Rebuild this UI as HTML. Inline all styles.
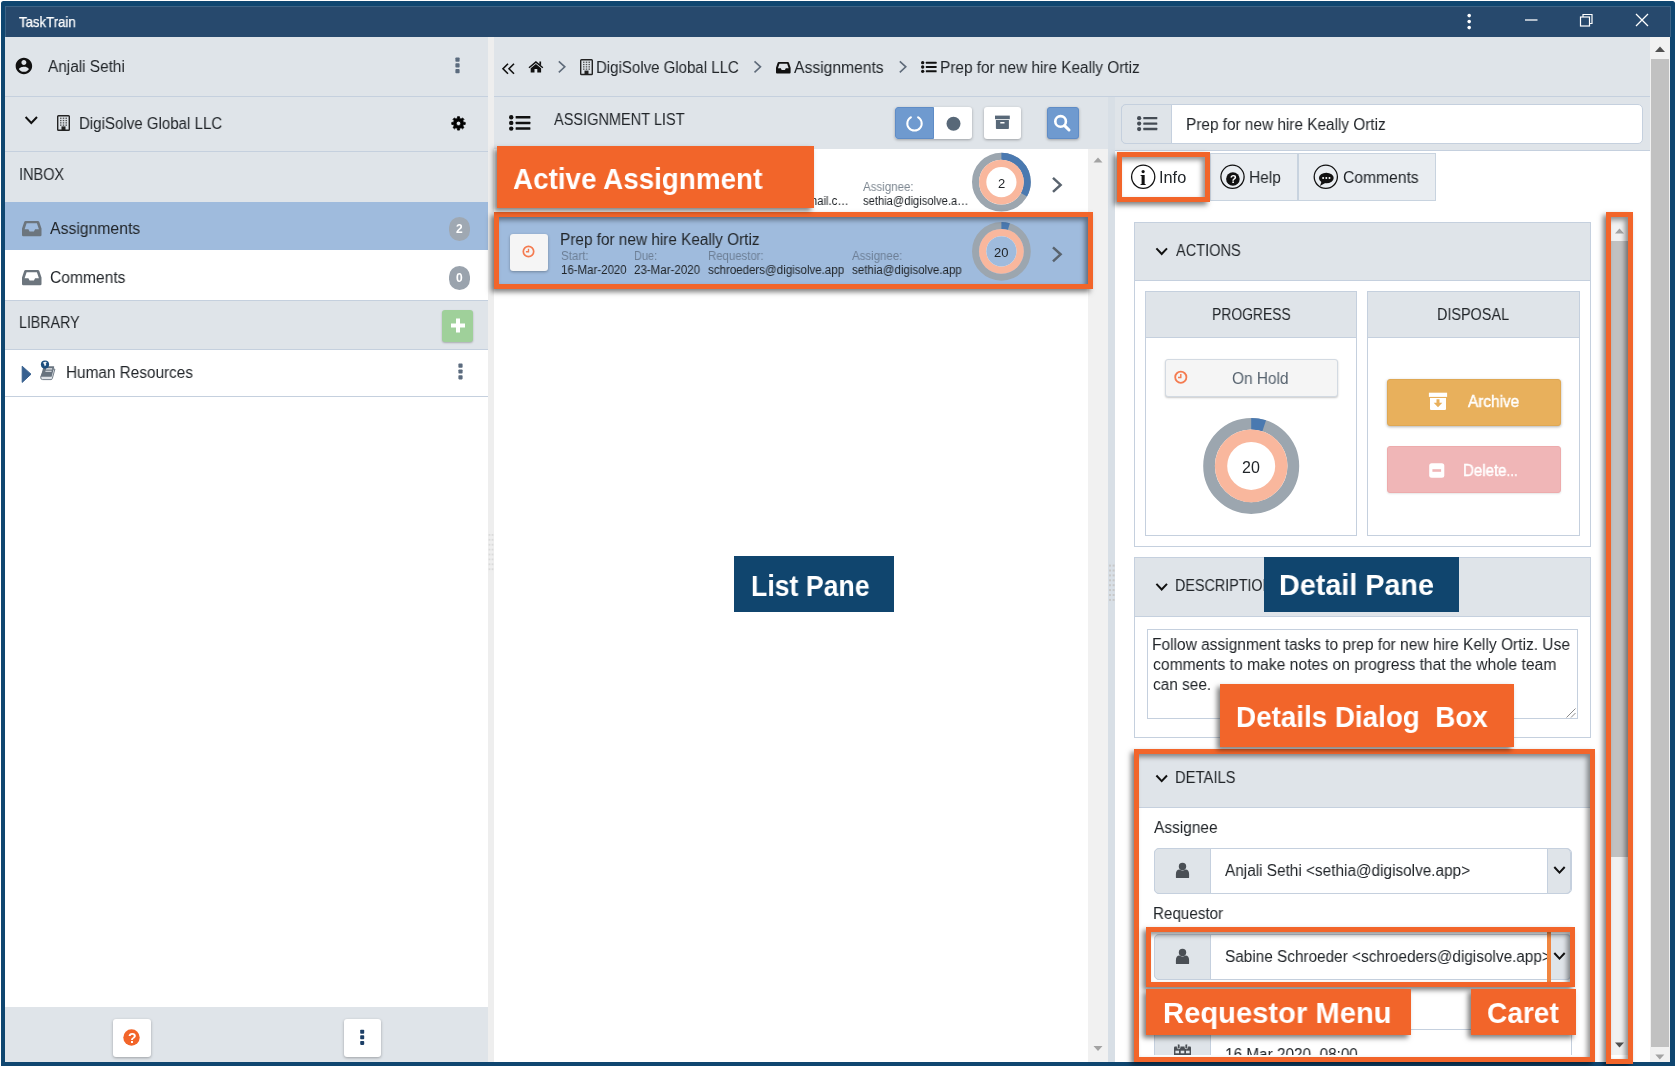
<!DOCTYPE html>
<html lang="en">
<head>
<meta charset="utf-8">
<title>TaskTrain</title>
<style>
*{box-sizing:border-box;margin:0;padding:0}
html,body{width:1676px;height:1066px;overflow:hidden}
body{background:#fff;font-family:"Liberation Sans",Arial,sans-serif;font-size:15px;color:#212529;position:relative}
.abs{position:absolute}
.t{position:absolute;white-space:nowrap;line-height:1;will-change:transform}
svg{position:absolute;overflow:visible}
.gray{background:#dfe4e9}
.bb{border-bottom:1px solid #c5d0de}
.white{background:#fff}
.btn{position:absolute;border-radius:3px;box-shadow:0 1px 3px rgba(0,0,0,.3)}
.call{position:absolute;background:#f2652a;box-shadow:-3px 3px 5px rgba(0,0,0,.5)}
.hl{position:absolute;border:5px solid #f2652a;box-shadow:-3px 3px 5px rgba(0,0,0,.5), inset -3px 3px 5px rgba(0,0,0,.45)}
.panel{position:absolute;border:1px solid #c5d0de;background:#fff}
.phead{position:absolute;left:0;top:0;right:0;background:#dfe4e9;border-bottom:1px solid #c5d0de}
</style>
</head>
<body>
<div class="abs" style="left:0.5px;top:1.4px;width:1674.6px;height:1064.6px;background:#0f4670;border-radius:2.5px 2.5px 0 0"></div>
<div class="abs" style="left:5px;top:6px;width:1665.6px;height:31px;background:#27496d;border:1px solid #3d6385;border-bottom:none"></div>
<div class="t" style="left:19.00px;top:15px;font-size:14.5px;transform:scaleX(0.9093);transform-origin:0 0;color:#fff;-webkit-text-stroke:0.25px #fff;">TaskTrain</div>
<svg style="left:0;top:0" width="1" height="1"><circle cx="1469.2" cy="15.6" r="1.8" fill="#fff"/><circle cx="1469.2" cy="21.6" r="1.8" fill="#fff"/><circle cx="1469.2" cy="27.6" r="1.8" fill="#fff"/><line x1="1525" y1="20" x2="1537.5" y2="20" stroke="#fff" stroke-width="1.3"/><rect x="1580.5" y="17" width="9" height="9" fill="none" stroke="#fff" stroke-width="1.2"/><polyline points="1583,17 1583,14.5 1592,14.5 1592,23.5 1589.5,23.5" fill="none" stroke="#fff" stroke-width="1.2"/><path d="M1636,14 L1648,26 M1648,14 L1636,26" stroke="#fff" stroke-width="1.3" fill="none"/></svg>
<div class="abs" style="left:5px;top:37px;width:1665px;height:1025px;background:#fff"></div>
<div class="abs" style="left:5px;top:37px;width:483px;height:1025px;background:#fff"></div>
<div class="abs" style="left:488px;top:37px;width:6px;height:1025px;background:#eeeeee"></div>
<div class="abs" style="left:1649.3px;top:37px;width:20.9px;height:1025px;background:#f1f1f1"></div>
<div class="abs" style="left:1651px;top:58.5px;width:18.2px;height:988.5px;background:#c1c1c1"></div>
<svg style="left:0;top:0" width="1" height="1"><path d="M1655,52 L1660,46.5 L1665,52Z" fill="#505050"/><path d="M1655.3,1054.6 L1659.8,1059.5 L1664.3,1054.6Z" fill="#a3a3a3"/></svg>
<div class="abs gray bb" style="left:5px;top:37px;width:483px;height:60px;"></div>
<div class="abs gray bb" style="left:5px;top:97px;width:483px;height:55px;"></div>
<div class="abs gray" style="left:5px;top:152px;width:483px;height:50px;"></div>
<div class="abs" style="left:5px;top:202px;width:483px;height:48px;background:#9fbbdd"></div>
<div class="abs white bb" style="left:5px;top:250px;width:483px;height:51px;"></div>
<div class="abs gray bb" style="left:5px;top:301px;width:483px;height:49px;"></div>
<div class="abs white bb" style="left:5px;top:350px;width:483px;height:47px;"></div>
<div class="abs gray" style="left:5px;top:1007px;width:483px;height:55px;"></div>
<svg style="left:14.15px;top:56.3px" width="19.8" height="19.8" viewBox="0 0 24 24" ><path d="M12 2C6.48 2 2 6.48 2 12s4.48 10 10 10 10-4.48 10-10S17.52 2 12 2zm0 3c1.66 0 3 1.34 3 3s-1.34 3-3 3-3-1.34-3-3 1.34-3 3-3zm0 14.2c-2.5 0-4.71-1.28-6-3.22.03-1.99 4-3.08 6-3.08 1.99 0 5.97 1.09 6 3.08-1.29 1.94-3.5 3.22-6 3.22z" fill="#111"/></svg>
<div class="t" style="left:48.30px;top:59px;font-size:16px;transform:scaleX(0.9598);transform-origin:0 0;">Anjali Sethi</div>
<svg style="left:0;top:0" width="1" height="1"><rect x="455.4" y="57.5" width="4.2" height="4.2" rx="0.8" fill="#5b6b7e"/><rect x="455.4" y="63.3" width="4.2" height="4.2" rx="0.8" fill="#5b6b7e"/><rect x="455.4" y="69.1" width="4.2" height="4.2" rx="0.8" fill="#5b6b7e"/></svg>
<svg style="left:0;top:0" width="1" height="1"><polyline points="25.6,117.0 31.3,123.0 37.0,117.0" fill="none" stroke="#111" stroke-width="2"/></svg>
<svg style="left:57px;top:115.3px" width="13" height="16"><rect x="0.7" y="0.7" width="11.6" height="14.6" fill="none" stroke="#222" stroke-width="1.4" rx="0.8"/><rect x="3.02" y="2.60" width="1.5" height="1.3" fill="#222" opacity="0.75"/><rect x="3.02" y="4.90" width="1.5" height="1.3" fill="#222" opacity="0.75"/><rect x="3.02" y="7.20" width="1.5" height="1.3" fill="#222" opacity="0.75"/><rect x="3.02" y="9.50" width="1.5" height="1.3" fill="#222" opacity="0.75"/><rect x="5.75" y="2.60" width="1.5" height="1.3" fill="#222" opacity="0.75"/><rect x="5.75" y="4.90" width="1.5" height="1.3" fill="#222" opacity="0.75"/><rect x="5.75" y="7.20" width="1.5" height="1.3" fill="#222" opacity="0.75"/><rect x="5.75" y="9.50" width="1.5" height="1.3" fill="#222" opacity="0.75"/><rect x="8.48" y="2.60" width="1.5" height="1.3" fill="#222" opacity="0.75"/><rect x="8.48" y="4.90" width="1.5" height="1.3" fill="#222" opacity="0.75"/><rect x="8.48" y="7.20" width="1.5" height="1.3" fill="#222" opacity="0.75"/><rect x="8.48" y="9.50" width="1.5" height="1.3" fill="#222" opacity="0.75"/><rect x="4.50" y="11.40" width="4" height="4" fill="#222"/></svg>
<div class="t" style="left:79.26px;top:116px;font-size:16px;transform:scaleX(0.9414);transform-origin:0 0;">DigiSolve Global LLC</div>
<svg style="left:0;top:0" width="1" height="1"><path d="M465.22,122.39 L465.22,124.41 L463.38,124.61 L462.81,126.00 L463.97,127.44 L462.54,128.87 L461.10,127.71 L459.71,128.28 L459.51,130.12 L457.49,130.12 L457.29,128.28 L455.90,127.71 L454.46,128.87 L453.03,127.44 L454.19,126.00 L453.62,124.61 L451.78,124.41 L451.78,122.39 L453.62,122.19 L454.19,120.80 L453.03,119.36 L454.46,117.93 L455.90,119.09 L457.29,118.52 L457.49,116.68 L459.51,116.68 L459.71,118.52 L461.10,119.09 L462.54,117.93 L463.97,119.36 L462.81,120.80 L463.38,122.19Z M456.26,123.4 a2.24,2.24 0 1,0 4.49,0 a2.24,2.24 0 1,0 -4.49,0Z" fill="#000" fill-rule="evenodd" stroke="#000" stroke-width="0.8" stroke-linejoin="round"/></svg>
<div class="t" style="left:19.09px;top:167px;font-size:16px;transform:scaleX(0.9060);transform-origin:0 0;">INBOX</div>
<svg style="left:21.7px;top:221.4px" width="19.5" height="15.2" viewBox="0 0 19.5 15.2" preserveAspectRatio="none"><path d="M3.6 0 H15.9 Q16.9 0 17.3 0.9 L19.5 7.6 V13.9 Q19.5 15.2 18.2 15.2 H1.3 Q0 15.2 0 13.9 V7.6 L2.2 0.9 Q2.6 0 3.6 0 Z M4.6 2.2 L2.6 8.2 H6.4 L7.6 10.6 H11.9 L13.1 8.2 H16.9 L14.9 2.2 Z" fill="#6c757d" fill-rule="evenodd"/></svg>
<div class="t" style="left:49.80px;top:221px;font-size:16px;transform:scaleX(0.9848);transform-origin:0 0;">Assignments</div>
<div class="abs" style="left:448.9px;top:217px;width:21px;height:24px;border-radius:10.5px;background:#9fa8b2"></div>
<div class="t" style="left:455.90px;top:223px;font-size:12px;color:#fff;font-weight:bold;">2</div>
<svg style="left:21.7px;top:270px" width="19.5" height="15.2" viewBox="0 0 19.5 15.2" preserveAspectRatio="none"><path d="M3.6 0 H15.9 Q16.9 0 17.3 0.9 L19.5 7.6 V13.9 Q19.5 15.2 18.2 15.2 H1.3 Q0 15.2 0 13.9 V7.6 L2.2 0.9 Q2.6 0 3.6 0 Z M4.6 2.2 L2.6 8.2 H6.4 L7.6 10.6 H11.9 L13.1 8.2 H16.9 L14.9 2.2 Z" fill="#6c757d" fill-rule="evenodd"/></svg>
<div class="t" style="left:49.80px;top:270px;font-size:16px;transform:scaleX(0.9761);transform-origin:0 0;">Comments</div>
<div class="abs" style="left:448.9px;top:265.5px;width:21px;height:24px;border-radius:10.5px;background:#9aa3ad"></div>
<div class="t" style="left:455.90px;top:272px;font-size:12px;color:#fff;font-weight:bold;">0</div>
<div class="t" style="left:19.11px;top:315px;font-size:16px;transform:scaleX(0.8888);transform-origin:0 0;">LIBRARY</div>
<div class="abs" style="left:442.2px;top:310.4px;width:31.2px;height:31.2px;background:#9fd09a;border-radius:3px;box-shadow:0 1px 2px rgba(0,0,0,.25)"></div>
<svg style="left:0;top:0" width="1" height="1"><path d="M451,325.6 H465 M458,318.6 V332.6" stroke="#fff" stroke-width="4" fill="none"/></svg>
<svg style="left:0;top:0" width="1" height="1"><path d="M22.2,366.2 L31,374.2 L22.2,382.4Z" fill="#37608f" stroke="#37608f" stroke-width="1" stroke-linejoin="round"/></svg>
<svg style="left:0;top:0" width="1" height="1"><path d="M44.3,369.1 H54.9 L52.3,378.6 Q52,379.6 51,379.6 H42.6 Q40.3,379.6 40.7,376.8 Z" fill="#dfe3e8" stroke="#68737f" stroke-width="0.9" stroke-linejoin="round"/><path d="M43.6,366.3 H53.6 Q54.4,366.3 54.2,367.1 L51.6,376.8 H40.7 Z" fill="#68737f"/><path d="M46,368.9 H52.2 M45.4,371.3 H51.6" stroke="#e9edf1" stroke-width="1.1" fill="none"/><circle cx="45" cy="364.6" r="4.1" fill="#1c4e7e"/><path d="M43,362.6 Q44.8,361.2 46.9,362 L45.7,363.8 L46.3,365 L44.7,366.2 L44.2,364.4 Z" fill="#f1f5f9"/></svg>
<div class="t" style="left:65.84px;top:365px;font-size:16px;transform:scaleX(0.9582);transform-origin:0 0;">Human Resources</div>
<svg style="left:0;top:0" width="1" height="1"><rect x="458.4" y="363.6" width="4.2" height="4.2" rx="0.8" fill="#5b6b7e"/><rect x="458.4" y="369.4" width="4.2" height="4.2" rx="0.8" fill="#5b6b7e"/><rect x="458.4" y="375.2" width="4.2" height="4.2" rx="0.8" fill="#5b6b7e"/></svg>
<div class="btn" style="left:113px;top:1019px;width:37.5px;height:37.5px;background:#fff"></div>
<div class="btn" style="left:343.5px;top:1019px;width:37.5px;height:37.5px;background:#fff"></div>
<svg style="left:0;top:0" width="1" height="1"><circle cx="131.5" cy="1037.5" r="8.2" fill="#f2652a"/></svg>
<div class="t" style="left:127.50px;top:1031px;font-size:14px;color:#fff;font-weight:bold;">?</div>
<svg style="left:0;top:0" width="1" height="1"><rect x="360.2" y="1029.7" width="4.0" height="4.0" rx="0.8" fill="#1c3f66"/><rect x="360.2" y="1035.3" width="4.0" height="4.0" rx="0.8" fill="#1c3f66"/><rect x="360.2" y="1040.9" width="4.0" height="4.0" rx="0.8" fill="#1c3f66"/></svg>
<div class="abs gray bb" style="left:494px;top:37px;width:1156px;height:60px;"></div>
<svg style="left:0;top:0" width="1" height="1"><polyline points="508,63.8 503,68.8 508,73.8" fill="none" stroke="#111" stroke-width="1.6"/><polyline points="514,63.8 509,68.8 514,73.8" fill="none" stroke="#111" stroke-width="1.6"/></svg>
<svg style="left:0;top:0" width="1" height="1"><g transform="translate(528.7,60.6)" fill="#111"><path d="M7.2,0.4 L14.6,6.6 L13.7,7.7 L7.2,2.3 L0.7,7.7 L-0.2,6.6Z"/><path d="M7.2,3.4 L12.4,7.7 V11.9 H8.6 V8.4 H5.8 V11.9 H2 V7.7Z"/><rect x="10.7" y="0.9" width="1.7" height="3.4"/></g></svg>
<svg style="left:0;top:0" width="1" height="1"><polyline points="558.8,61.3 564.8,66.8 558.8,72.3" fill="none" stroke="#5f6b7a" stroke-width="1.6"/></svg>
<svg style="left:579.7px;top:59px" width="13" height="16.2"><rect x="0.7" y="0.7" width="11.6" height="14.799999999999999" fill="none" stroke="#222" stroke-width="1.4" rx="0.8"/><rect x="3.02" y="2.60" width="1.5" height="1.3" fill="#222" opacity="0.75"/><rect x="3.02" y="4.90" width="1.5" height="1.3" fill="#222" opacity="0.75"/><rect x="3.02" y="7.20" width="1.5" height="1.3" fill="#222" opacity="0.75"/><rect x="3.02" y="9.50" width="1.5" height="1.3" fill="#222" opacity="0.75"/><rect x="5.75" y="2.60" width="1.5" height="1.3" fill="#222" opacity="0.75"/><rect x="5.75" y="4.90" width="1.5" height="1.3" fill="#222" opacity="0.75"/><rect x="5.75" y="7.20" width="1.5" height="1.3" fill="#222" opacity="0.75"/><rect x="5.75" y="9.50" width="1.5" height="1.3" fill="#222" opacity="0.75"/><rect x="8.48" y="2.60" width="1.5" height="1.3" fill="#222" opacity="0.75"/><rect x="8.48" y="4.90" width="1.5" height="1.3" fill="#222" opacity="0.75"/><rect x="8.48" y="7.20" width="1.5" height="1.3" fill="#222" opacity="0.75"/><rect x="8.48" y="9.50" width="1.5" height="1.3" fill="#222" opacity="0.75"/><rect x="4.50" y="11.60" width="4" height="4" fill="#222"/></svg>
<div class="t" style="left:595.86px;top:60px;font-size:16px;transform:scaleX(0.9387);transform-origin:0 0;">DigiSolve Global LLC</div>
<svg style="left:0;top:0" width="1" height="1"><polyline points="754.5,61.3 760.5,66.8 754.5,72.3" fill="none" stroke="#5f6b7a" stroke-width="1.6"/></svg>
<svg style="left:775.6px;top:61.8px" width="14.6" height="11.6" viewBox="0 0 19.5 15.2" preserveAspectRatio="none"><path d="M3.6 0 H15.9 Q16.9 0 17.3 0.9 L19.5 7.6 V13.9 Q19.5 15.2 18.2 15.2 H1.3 Q0 15.2 0 13.9 V7.6 L2.2 0.9 Q2.6 0 3.6 0 Z M4.6 2.2 L2.6 8.2 H6.4 L7.6 10.6 H11.9 L13.1 8.2 H16.9 L14.9 2.2 Z" fill="#111" fill-rule="evenodd"/></svg>
<div class="t" style="left:793.80px;top:60px;font-size:16px;transform:scaleX(0.9793);transform-origin:0 0;">Assignments</div>
<svg style="left:0;top:0" width="1" height="1"><polyline points="899.8,61.3 905.8,66.8 899.8,72.3" fill="none" stroke="#5f6b7a" stroke-width="1.6"/></svg>
<svg style="left:921px;top:61.4px" width="15.6" height="12"><circle cx="1.68" cy="1.68" r="1.68" fill="#111"/><rect x="4.84" y="0.72" width="10.76" height="1.92" rx="0.5" fill="#111"/><circle cx="1.68" cy="6.00" r="1.68" fill="#111"/><rect x="4.84" y="5.04" width="10.76" height="1.92" rx="0.5" fill="#111"/><circle cx="1.68" cy="10.32" r="1.68" fill="#111"/><rect x="4.84" y="9.36" width="10.76" height="1.92" rx="0.5" fill="#111"/></svg>
<div class="t" style="left:939.74px;top:60px;font-size:16px;transform:scaleX(0.9600);transform-origin:0 0;">Prep for new hire Keally Ortiz</div>
<div class="abs gray" style="left:494px;top:97px;width:615px;height:52px;"></div>
<svg style="left:508.6px;top:115px" width="21.4" height="15.8"><circle cx="2.21" cy="2.21" r="2.21" fill="#111"/><rect x="6.63" y="0.95" width="14.77" height="2.53" rx="0.5" fill="#111"/><circle cx="2.21" cy="7.90" r="2.21" fill="#111"/><rect x="6.63" y="6.64" width="14.77" height="2.53" rx="0.5" fill="#111"/><circle cx="2.21" cy="13.59" r="2.21" fill="#111"/><rect x="6.63" y="12.32" width="14.77" height="2.53" rx="0.5" fill="#111"/></svg>
<div class="t" style="left:553.90px;top:112px;font-size:16px;transform:scaleX(0.9081);transform-origin:0 0;">ASSIGNMENT LIST</div>
<div class="btn" style="left:895px;top:107px;width:77px;height:32px;background:#fff"></div>
<div class="abs" style="left:895px;top:107px;width:39px;height:32px;background:#6f9acf;border:1px solid #5f8cc6;border-radius:3px 0 0 3px"></div>
<svg style="left:0;top:0" width="1" height="1"><path d="M911.6,116.8 A7.2,7.2 0 1 0 917.4,116.8" fill="none" stroke="#fff" stroke-width="2"/><circle cx="953.5" cy="123.8" r="7" fill="#586878"/></svg>
<div class="btn" style="left:983.5px;top:107px;width:37px;height:32px;background:#fff"></div>
<svg style="left:0;top:0" width="1" height="1"><rect x="995" y="115.6" width="14.8" height="3.6" fill="#586878"/><path d="M995.9,120.1 H1008.9 V128.2 Q1008.9,129 1008.1,129 H996.7 Q995.9,129 995.9,128.2Z M1000.3,121.9 V123.4 H1004.5 V121.9Z" fill="#586878" fill-rule="evenodd"/></svg>
<div class="btn" style="left:1047px;top:107px;width:31.5px;height:32px;background:#6f9acf;border:1px solid #5f8cc6"></div>
<svg style="left:0;top:0" width="1" height="1"><circle cx="1060.6" cy="121.4" r="5.3" fill="none" stroke="#fff" stroke-width="2.6"/><line x1="1064.6" y1="125.6" x2="1069" y2="130" stroke="#fff" stroke-width="3" stroke-linecap="round"/></svg>
<div class="abs white" style="left:494px;top:149px;width:594px;height:913px;"></div>
<div class="abs" style="left:1088px;top:149px;width:20px;height:913px;background:#f1f1f1"></div>
<svg style="left:0;top:0" width="1" height="1"><path d="M1093.5,162.5 L1098,157.5 L1102.5,162.5Z" fill="#a3a3a3"/><path d="M1093.5,1046 L1098,1051 L1102.5,1046Z" fill="#a3a3a3"/></svg>
<div class="abs" style="left:1108.2px;top:97px;width:7px;height:965px;background:#d8dfe6"></div>
<svg style="left:0;top:0" width="1" height="1"><rect x="1109.0" y="564.6" width="2" height="2" fill="#c8c8c8"/><rect x="1112.6" y="564.6" width="2" height="2" fill="#c8c8c8"/><rect x="1109.0" y="569.5" width="2" height="2" fill="#c8c8c8"/><rect x="1112.6" y="569.5" width="2" height="2" fill="#c8c8c8"/><rect x="1109.0" y="574.4" width="2" height="2" fill="#c8c8c8"/><rect x="1112.6" y="574.4" width="2" height="2" fill="#c8c8c8"/><rect x="1109.0" y="579.3" width="2" height="2" fill="#c8c8c8"/><rect x="1112.6" y="579.3" width="2" height="2" fill="#c8c8c8"/><rect x="1109.0" y="584.2" width="2" height="2" fill="#c8c8c8"/><rect x="1112.6" y="584.2" width="2" height="2" fill="#c8c8c8"/><rect x="1109.0" y="589.1" width="2" height="2" fill="#c8c8c8"/><rect x="1112.6" y="589.1" width="2" height="2" fill="#c8c8c8"/><rect x="1109.0" y="594.0" width="2" height="2" fill="#c8c8c8"/><rect x="1112.6" y="594.0" width="2" height="2" fill="#c8c8c8"/><rect x="1109.0" y="598.9" width="2" height="2" fill="#c8c8c8"/><rect x="1112.6" y="598.9" width="2" height="2" fill="#c8c8c8"/></svg>
<svg style="left:0;top:0" width="1" height="1"><rect x="488.6" y="534.0" width="1.8" height="1.8" fill="#dadada"/><rect x="491.6" y="534.0" width="1.8" height="1.8" fill="#dadada"/><rect x="488.6" y="538.9" width="1.8" height="1.8" fill="#dadada"/><rect x="491.6" y="538.9" width="1.8" height="1.8" fill="#dadada"/><rect x="488.6" y="543.8" width="1.8" height="1.8" fill="#dadada"/><rect x="491.6" y="543.8" width="1.8" height="1.8" fill="#dadada"/><rect x="488.6" y="548.7" width="1.8" height="1.8" fill="#dadada"/><rect x="491.6" y="548.7" width="1.8" height="1.8" fill="#dadada"/><rect x="488.6" y="553.6" width="1.8" height="1.8" fill="#dadada"/><rect x="491.6" y="553.6" width="1.8" height="1.8" fill="#dadada"/><rect x="488.6" y="558.5" width="1.8" height="1.8" fill="#dadada"/><rect x="491.6" y="558.5" width="1.8" height="1.8" fill="#dadada"/><rect x="488.6" y="563.4" width="1.8" height="1.8" fill="#dadada"/><rect x="491.6" y="563.4" width="1.8" height="1.8" fill="#dadada"/><rect x="488.6" y="568.3" width="1.8" height="1.8" fill="#dadada"/><rect x="491.6" y="568.3" width="1.8" height="1.8" fill="#dadada"/></svg>
<div class="abs" style="left:494px;top:215px;width:594px;height:1px;background:#dfe4e9"></div>
<div class="t" style="left:707.50px;top:181px;font-size:12px;transform:scaleX(0.9492);transform-origin:0 0;color:#7d8791;">Requestor:</div>
<div class="t" style="left:739.17px;top:195px;font-size:12px;transform:scaleX(0.9500);transform-origin:0 0;">schroeder@gmail.c…</div>
<div class="t" style="left:862.60px;top:181px;font-size:12px;transform:scaleX(0.9606);transform-origin:0 0;color:#7d8791;">Assignee:</div>
<div class="t" style="left:862.60px;top:195px;font-size:12px;transform:scaleX(0.9329);transform-origin:0 0;">sethia@digisolve.a…</div>
<svg style="left:0;top:0" width="1" height="1"><circle cx="1001.4" cy="182.1" r="25.90" fill="none" stroke="#9ca6af" stroke-width="7.00"/><circle cx="1001.4" cy="182.1" r="25.90" fill="none" stroke="#4a79b0" stroke-width="7.00" stroke-dasharray="53.70 162.73" transform="rotate(-90 1001.4 182.1)"/><circle cx="1001.4" cy="182.1" r="22.40" fill="#f9b79d"/><circle cx="1001.4" cy="182.1" r="15.10" fill="#fff"/></svg>
<div class="t" style="left:997.90px;top:177px;font-size:13px;">2</div>
<svg style="left:0;top:0" width="1" height="1"><polyline points="1053.0,177.9 1060.6,184.9 1053.0,191.9" fill="none" stroke="#59636e" stroke-width="2.5"/></svg>
<div class="abs" style="left:494px;top:216px;width:594px;height:69px;background:#9fbbdd"></div>
<div class="btn" style="left:510px;top:233.5px;width:37.5px;height:37.5px;background:#f5f5f5"></div>
<svg style="left:0;top:0" width="1" height="1"><circle cx="528.5" cy="251.5" r="5.2" fill="none" stroke="#f47b50" stroke-width="1.7"/><polyline points="528.5,248.64 528.5,251.80 525.90,251.80" fill="none" stroke="#f47b50" stroke-width="1.36"/></svg>
<div class="t" style="left:559.64px;top:232px;font-size:16px;transform:scaleX(0.9591);transform-origin:0 0;">Prep for new hire Keally Ortiz</div>
<div class="t" style="left:560.60px;top:250px;font-size:12px;transform:scaleX(0.9668);transform-origin:0 0;color:#6d7f96;">Start:</div>
<div class="t" style="left:560.60px;top:264px;font-size:12px;transform:scaleX(0.9561);transform-origin:0 0;">16-Mar-2020</div>
<div class="t" style="left:634.00px;top:250px;font-size:12px;transform:scaleX(0.9115);transform-origin:0 0;color:#6d7f96;">Due:</div>
<div class="t" style="left:634.00px;top:264px;font-size:12px;transform:scaleX(0.9619);transform-origin:0 0;">23-Mar-2020</div>
<div class="t" style="left:707.50px;top:250px;font-size:12px;transform:scaleX(0.9492);transform-origin:0 0;color:#6d7f96;">Requestor:</div>
<div class="t" style="left:707.50px;top:264px;font-size:12px;transform:scaleX(0.9611);transform-origin:0 0;">schroeders@digisolve.app</div>
<div class="t" style="left:852.30px;top:250px;font-size:12px;transform:scaleX(0.9548);transform-origin:0 0;color:#6d7f96;">Assignee:</div>
<div class="t" style="left:852.30px;top:264px;font-size:12px;transform:scaleX(0.9600);transform-origin:0 0;">sethia@digisolve.app</div>
<svg style="left:0;top:0" width="1" height="1"><circle cx="1001.4" cy="251.3" r="25.90" fill="none" stroke="#9ca6af" stroke-width="7.00"/><circle cx="1001.4" cy="251.3" r="25.90" fill="none" stroke="#4a79b0" stroke-width="7.00" stroke-dasharray="7.65 162.73" transform="rotate(-90 1001.4 251.3)"/><circle cx="1001.4" cy="251.3" r="22.40" fill="#f9b79d"/><circle cx="1001.4" cy="251.3" r="15.10" fill="#fff"/></svg>
<svg style="left:0;top:0" width="1" height="1"><circle cx="1001.4" cy="251.3" r="15.1" fill="#9fbbdd"/></svg>
<div class="t" style="left:994.29px;top:246px;font-size:13px;">20</div>
<svg style="left:0;top:0" width="1" height="1"><polyline points="1053.0,247.3 1060.6,254.3 1053.0,261.3" fill="none" stroke="#59636e" stroke-width="2.5"/></svg>
<div class="abs white" style="left:1114.5px;top:97px;width:535.5px;height:965px;"></div>
<div class="abs gray bb" style="left:1114.5px;top:97px;width:535.5px;height:54px;"></div>
<div class="abs" style="left:1121px;top:104px;width:521.6px;height:40px;background:#fff;border:1px solid #c5d0de;border-radius:5px"></div>
<div class="abs" style="left:1121px;top:104px;width:51px;height:40px;background:#dfe4e9;border:1px solid #c5d0de;border-radius:5px 0 0 5px"></div>
<svg style="left:1136.5px;top:116.4px" width="20.3" height="15.2"><circle cx="2.13" cy="2.13" r="2.13" fill="#454c55"/><rect x="6.29" y="0.91" width="14.01" height="2.43" rx="0.5" fill="#454c55"/><circle cx="2.13" cy="7.60" r="2.13" fill="#454c55"/><rect x="6.29" y="6.38" width="14.01" height="2.43" rx="0.5" fill="#454c55"/><circle cx="2.13" cy="13.07" r="2.13" fill="#454c55"/><rect x="6.29" y="11.86" width="14.01" height="2.43" rx="0.5" fill="#454c55"/></svg>
<div class="t" style="left:1186.24px;top:117px;font-size:16px;transform:scaleX(0.9600);transform-origin:0 0;">Prep for new hire Keally Ortiz</div>
<div class="abs" style="left:1120px;top:153px;width:90px;height:48px;background:#fff"></div>
<div class="abs" style="left:1210px;top:153px;width:87.5px;height:48px;background:#e9edf1;border:1px solid #c8d3df"></div>
<div class="abs" style="left:1297.5px;top:153px;width:138.5px;height:48px;background:#e9edf1;border:1px solid #c8d3df"></div>
<svg style="left:0;top:0" width="1" height="1"><circle cx="1143.2" cy="176.8" r="11.6" fill="none" stroke="#111" stroke-width="1.3"/><circle cx="1232.5" cy="176.8" r="11.6" fill="none" stroke="#111" stroke-width="1.3"/><circle cx="1325.8" cy="176.8" r="11.6" fill="none" stroke="#111" stroke-width="1.3"/><circle cx="1232.9" cy="179" r="6.8" fill="#111"/><ellipse cx="1326.3" cy="178" rx="7.4" ry="5.2" fill="#111"/><path d="M1321.5,181.5 L1320,186 L1326,182.6Z" fill="#111"/><circle cx="1323.1" cy="178" r="1" fill="#fff"/><circle cx="1326.3" cy="178" r="1" fill="#fff"/><circle cx="1329.5" cy="178" r="1" fill="#fff"/></svg>
<div class="t" style="left:1140.10px;top:168px;font-size:20px;transform:scaleX(1.1000);transform-origin:0 0;font-family:'Liberation Serif',serif;color:#111;font-weight:bold;">i</div>
<div class="t" style="left:1229.50px;top:174px;font-size:11px;color:#fff;font-weight:bold;">?</div>
<div class="t" style="left:1159.48px;top:170px;font-size:16px;transform:scaleX(1.0198);transform-origin:0 0;">Info</div>
<div class="t" style="left:1248.53px;top:170px;font-size:16px;transform:scaleX(0.9685);transform-origin:0 0;">Help</div>
<div class="t" style="left:1342.80px;top:170px;font-size:16px;transform:scaleX(0.9786);transform-origin:0 0;">Comments</div>
<div class="abs" id="dscroll" style="left:1115px;top:208px;width:535px;height:846.5px;overflow:hidden">
<div class="panel" style="left:19px;top:13.5px;width:457px;height:325px;"></div>
<div class="abs" style="left:19px;top:13.5px;width:457px;height:59.5px;background:#dfe4e9;border:1px solid #c5d0de"></div>
<svg style="left:0;top:0" width="1" height="1"><polyline points="41.4,40.4 46.7,46.0 52.0,40.4" fill="none" stroke="#111" stroke-width="2"/></svg>
<div class="t" style="left:61.00px;top:35px;font-size:16px;transform:scaleX(0.9085);transform-origin:0 0;">ACTIONS</div>
<div class="panel" style="left:30px;top:83px;width:211.8px;height:245px;"></div>
<div class="abs" style="left:30px;top:83px;width:211.8px;height:47px;background:#dfe4e9;border:1px solid #c5d0de"></div>
<div class="t" style="left:96.83px;top:99px;font-size:16px;transform:scaleX(0.8684);transform-origin:0 0;">PROGRESS</div>
<div class="btn" style="left:49.59999999999991px;top:150.7px;width:173.2px;height:38.3px;background:#f5f5f5;border:1px solid #d3dae2;box-shadow:0 1px 2px rgba(0,0,0,.22)"></div>
<svg style="left:0;top:0" width="1" height="1"><circle cx="65.79999999999995" cy="169.2" r="5.6" fill="none" stroke="#f47b50" stroke-width="1.8"/><polyline points="65.79999999999995,166.12 65.79999999999995,169.50 63.00,169.50" fill="none" stroke="#f47b50" stroke-width="1.44"/></svg>
<div class="t" style="left:117.30px;top:163px;font-size:16px;transform:scaleX(0.9637);transform-origin:0 0;color:#56626e;">On Hold</div>
<svg style="left:0;top:0" width="1" height="1"><circle cx="136.20000000000005" cy="257.9" r="42.15" fill="none" stroke="#9ca6af" stroke-width="11.70"/><circle cx="136.20000000000005" cy="257.9" r="42.15" fill="none" stroke="#4a79b0" stroke-width="11.70" stroke-dasharray="13.24 264.84" transform="rotate(-90 136.20000000000005 257.9)"/><circle cx="136.20000000000005" cy="257.9" r="36.30" fill="#f9b79d"/><circle cx="136.20000000000005" cy="257.9" r="24.00" fill="#fff"/></svg>
<div class="t" style="left:127.25px;top:252px;font-size:16px;">20</div>
<div class="panel" style="left:252.4000000000001px;top:83px;width:212.5px;height:245px;"></div>
<div class="abs" style="left:252.4000000000001px;top:83px;width:212.5px;height:47px;background:#dfe4e9;border:1px solid #c5d0de"></div>
<div class="t" style="left:321.90px;top:99px;font-size:16px;transform:scaleX(0.8998);transform-origin:0 0;">DISPOSAL</div>
<div class="btn" style="left:271.5999999999999px;top:171.3px;width:174px;height:46.4px;background:#e8b05c;border:1px solid #dfa853"></div>
<svg style="left:0;top:0" width="1" height="1"><g transform="translate(313.9000000000001,184.7)" fill="#fff"><rect x="0" y="0" width="18.2" height="4.2"/><path d="M1.1,5.2 H17.1 V16.4 Q17.1,17.2 16.3,17.2 H1.9 Q1.1,17.2 1.1,16.4Z M7.6,6.6 V10 H4.8 L9.1,14.6 L13.4,10 H10.6 V6.6Z" fill-rule="evenodd"/></g></svg>
<div class="t" style="left:352.70px;top:186px;font-size:16px;transform:scaleX(0.9578);transform-origin:0 0;color:#fff;-webkit-text-stroke:0.45px #fff;">Archive</div>
<div class="btn" style="left:271.5999999999999px;top:238px;width:174px;height:47.4px;background:#f0b6b7;border:1px solid #edabac;box-shadow:0 1px 2px rgba(0,0,0,.1)"></div>
<svg style="left:0;top:0" width="1" height="1"><rect x="314.20000000000005" y="255.2" width="15.1" height="14.6" rx="2.5" fill="#fff"/><rect x="317.4000000000001" y="261.2" width="8.7" height="2.6" fill="#f0b6b7"/></svg>
<div class="t" style="left:347.76px;top:255px;font-size:16px;transform:scaleX(0.9415);transform-origin:0 0;color:#fff;-webkit-text-stroke:0.45px #fff;">Delete<span style="display:inline-block;transform:scaleX(.78);transform-origin:0 50%">…</span></div>
<div class="panel" style="left:19px;top:349px;width:457px;height:181px;"></div>
<div class="abs" style="left:19px;top:349px;width:457px;height:59.5px;background:#dfe4e9;border:1px solid #c5d0de"></div>
<svg style="left:0;top:0" width="1" height="1"><polyline points="41.4,375.9 46.7,381.5 52.0,375.9" fill="none" stroke="#111" stroke-width="2"/></svg>
<div class="t" style="left:60.10px;top:370px;font-size:16px;transform:scaleX(0.8953);transform-origin:0 0;">DESCRIPTION</div>
<div class="abs" style="left:32px;top:421.29999999999995px;width:430.7px;height:90.2px;background:#fff;border:1px solid #c5d0de"></div>
<div class="t" style="left:37.33px;top:429px;font-size:16px;transform:scaleX(0.9689);transform-origin:0 0;">Follow assignment tasks to prep for new hire Kelly Ortiz. Use</div>
<div class="t" style="left:38.30px;top:449px;font-size:16px;transform:scaleX(0.9795);transform-origin:0 0;">comments to make notes on progress that the whole team</div>
<div class="t" style="left:38.30px;top:469px;font-size:16px;transform:scaleX(0.9604);transform-origin:0 0;">can see.</div>
<svg style="left:0;top:0" width="1" height="1"><path d="M460.5,500.5 L451.5,509.5 M460.5,505 L456,509.5" stroke="#8a8a8a" stroke-width="1"/></svg>
<div class="panel" style="left:19px;top:540.6px;width:457px;height:400px;"></div>
<div class="abs" style="left:19px;top:540.6px;width:457px;height:59.5px;background:#dfe4e9;border:1px solid #c5d0de"></div>
<svg style="left:0;top:0" width="1" height="1"><polyline points="41.4,567.5 46.7,573.1 52.0,567.5" fill="none" stroke="#111" stroke-width="2"/></svg>
<div class="t" style="left:60.08px;top:562px;font-size:16px;transform:scaleX(0.9244);transform-origin:0 0;">DETAILS</div>
<div class="t" style="left:39.20px;top:612px;font-size:16px;transform:scaleX(0.9648);transform-origin:0 0;">Assignee</div>
<div class="abs" style="left:39px;top:640px;width:417.5px;height:45.5px;background:#fff;border:1px solid #c5d0de;border-radius:5px"></div>
<div class="abs" style="left:39px;top:640px;width:56.5px;height:45.5px;background:#dfe4e9;border:1px solid #c5d0de;border-radius:5px 0 0 5px"></div>
<svg style="left:0;top:0" width="1" height="1"><circle cx="67.5" cy="658.40" r="3.70" fill="#4a4f55"/><path d="M60.90,669.40 V666.20 Q60.90,661.80 64.50,661.60 Q67.5,663.60 70.50,661.60 Q74.10,661.80 74.10,666.20 V669.40 Q74.10,670.00 73.10,670.00 H61.90 Q60.90,670.00 60.90,669.40Z" fill="#4a4f55"/></svg>
<div class="abs" style="left:96px;top:641px;width:336.4px;height:43.5px;overflow:hidden"><div class="t" style="left:14.40px;top:14px;font-size:16px;transform:scaleX(0.9590);transform-origin:0 0;">Anjali Sethi &lt;sethia@digisolve.app&gt;</div>
</div>
<div class="abs" style="left:432.4000000000001px;top:640px;width:24.1px;height:45.5px;background:#dfe4e9;border:1px solid #c5d0de;border-radius:0 5px 5px 0"></div>
<svg style="left:0;top:0" width="1" height="1"><polyline points="439.3,659.0 444.5,664.6 449.7,659.0" fill="none" stroke="#111" stroke-width="2"/></svg>
<div class="t" style="left:38.25px;top:698px;font-size:16px;transform:scaleX(0.9498);transform-origin:0 0;">Requestor</div>
<div class="abs" style="left:39px;top:726px;width:417.5px;height:45.5px;background:#fff;border:1px solid #c5d0de;border-radius:5px"></div>
<div class="abs" style="left:39px;top:726px;width:56.5px;height:45.5px;background:#dfe4e9;border:1px solid #c5d0de;border-radius:5px 0 0 5px"></div>
<svg style="left:0;top:0" width="1" height="1"><circle cx="67.5" cy="744.40" r="3.70" fill="#4a4f55"/><path d="M60.90,755.40 V752.20 Q60.90,747.80 64.50,747.60 Q67.5,749.60 70.50,747.60 Q74.10,747.80 74.10,752.20 V755.40 Q74.10,756.00 73.10,756.00 H61.90 Q60.90,756.00 60.90,755.40Z" fill="#4a4f55"/></svg>
<div class="abs" style="left:96px;top:727px;width:336.4px;height:43.5px;overflow:hidden"><div class="t" style="left:14.40px;top:14px;font-size:16px;transform:scaleX(0.9583);transform-origin:0 0;">Sabine Schroeder &lt;schroeders@digisolve.app&gt;</div>
</div>
<div class="abs" style="left:432.4000000000001px;top:726px;width:24.1px;height:45.5px;background:#dfe4e9;border:1px solid #c5d0de;border-radius:0 5px 5px 0"></div>
<svg style="left:0;top:0" width="1" height="1"><polyline points="439.3,745.0 444.5,750.6 449.7,745.0" fill="none" stroke="#111" stroke-width="2"/></svg>
<div class="t" style="left:39.00px;top:784px;font-size:16px;">Start</div>
<div class="abs" style="left:39px;top:821.2px;width:417.5px;height:52px;background:#fff;border:1px solid #c5d0de;border-radius:5px"></div>
<div class="abs" style="left:39px;top:821.2px;width:56.5px;height:52px;background:#dfe4e9;border:1px solid #c5d0de;border-radius:5px 0 0 5px"></div>
<svg style="left:0;top:0" width="1" height="1"><g transform="translate(59,836.0999999999999)" fill="#4a4f55"><rect x="0" y="2.4" width="17" height="15" rx="1"/><rect x="3.4" y="0" width="2.6" height="4.6" rx="1" stroke="#dfe4e9" stroke-width="0.8"/><rect x="11" y="0" width="2.6" height="4.6" rx="1" stroke="#dfe4e9" stroke-width="0.8"/><g fill="#dfe4e9"><rect x="1.4" y="6.6" width="3.6" height="2.6"/><rect x="6.7" y="6.6" width="3.6" height="2.6"/><rect x="12" y="6.6" width="3.6" height="2.6"/></g></g></svg>
<div class="t" style="left:109.94px;top:839px;font-size:16px;transform:scaleX(0.9574);transform-origin:0 0;">16 Mar 2020  08:00</div>
<div class="abs" style="left:496px;top:8px;width:17px;height:860px;background:#f1f1f1"></div>
<div class="abs" style="left:496px;top:32.5px;width:17px;height:616.5px;background:#c1c1c1"></div>
<svg style="left:0;top:0" width="1" height="1"><path d="M500,25.5 L504.5,20.5 L509,25.5Z" fill="#a3a3a3"/><path d="M500,834.5 L504.5,839.5 L509,834.5Z" fill="#505050"/></svg>
</div>
<div class="abs" style="left:494px;top:212px;width:598.8px;height:77px;border:5px solid #f2652a;box-shadow:-3px 3px 5px rgba(0,0,0,.5), inset -3px 3px 5px rgba(0,0,0,.42);"></div>
<div class="abs" style="left:1116.8px;top:152.3px;width:93.0px;height:49.3px;border:5px solid #f2652a;box-shadow:-3px 3px 5px rgba(0,0,0,.5), inset -3px 3px 5px rgba(0,0,0,.42);"></div>
<div class="abs" style="left:1606.4px;top:212px;width:26.5px;height:852.3px;border:5px solid #f2652a;box-shadow:-3px 3px 5px rgba(0,0,0,.5), inset -3px 3px 5px rgba(0,0,0,.42);"></div>
<div class="abs" style="left:1134.4px;top:749px;width:460.4px;height:313px;border:5px solid #f2652a;box-shadow:-3px 3px 5px rgba(0,0,0,.5), inset -3px 3px 5px rgba(0,0,0,.42);"></div>
<div class="abs" style="left:1547px;top:929.5px;width:4px;height:54px;background:#f0853f"></div>
<div class="abs" style="left:1146px;top:927.2px;width:429.2px;height:59.9px;border:5px solid #f2652a;box-shadow:-3px 3px 5px rgba(0,0,0,.5), inset -3px 3px 5px rgba(0,0,0,.42);"></div>
<div class="abs" style="left:497px;top:146px;width:316.5px;height:62px;background:#f2652a;box-shadow:-3px 3px 5px rgba(0,0,0,.5);"></div>
<div class="t" style="left:513.40px;top:164px;font-size:29.3px;transform:scaleX(0.9489);transform-origin:0 0;color:#fff;font-weight:bold;">Active Assignment</div>
<div class="abs" style="left:734.3px;top:556.1px;width:159.3px;height:55.5px;background:#10456e;"></div>
<div class="t" style="left:751.09px;top:571px;font-size:29.3px;transform:scaleX(0.9104);transform-origin:0 0;color:#fff;font-weight:bold;">List Pane</div>
<div class="abs" style="left:1264px;top:557px;width:195px;height:54.8px;background:#10456e;"></div>
<div class="t" style="left:1279.42px;top:570px;font-size:29.3px;transform:scaleX(0.9805);transform-origin:0 0;color:#fff;font-weight:bold;">Detail Pane</div>
<div class="abs" style="left:1220.3px;top:683.6px;width:293.7px;height:63.3px;background:#f2652a;box-shadow:-3px 3px 5px rgba(0,0,0,.5);"></div>
<div class="t" style="left:1235.85px;top:702px;font-size:29.3px;transform:scaleX(0.9488);transform-origin:0 0;color:#fff;font-weight:bold;">Details Dialog  Box</div>
<div class="abs" style="left:1146.2px;top:988.5px;width:264.8px;height:46.9px;background:#f2652a;box-shadow:-3px 3px 5px rgba(0,0,0,.5);"></div>
<div class="t" style="left:1162.60px;top:998px;font-size:29.3px;transform:scaleX(0.9960);transform-origin:0 0;color:#fff;font-weight:bold;">Requestor Menu</div>
<div class="abs" style="left:1471.4px;top:988.5px;width:104.3px;height:46.5px;background:#f2652a;box-shadow:-3px 3px 5px rgba(0,0,0,.5);"></div>
<div class="t" style="left:1487.04px;top:998px;font-size:29.3px;transform:scaleX(0.9576);transform-origin:0 0;color:#fff;font-weight:bold;">Caret</div>
</body>
</html>
